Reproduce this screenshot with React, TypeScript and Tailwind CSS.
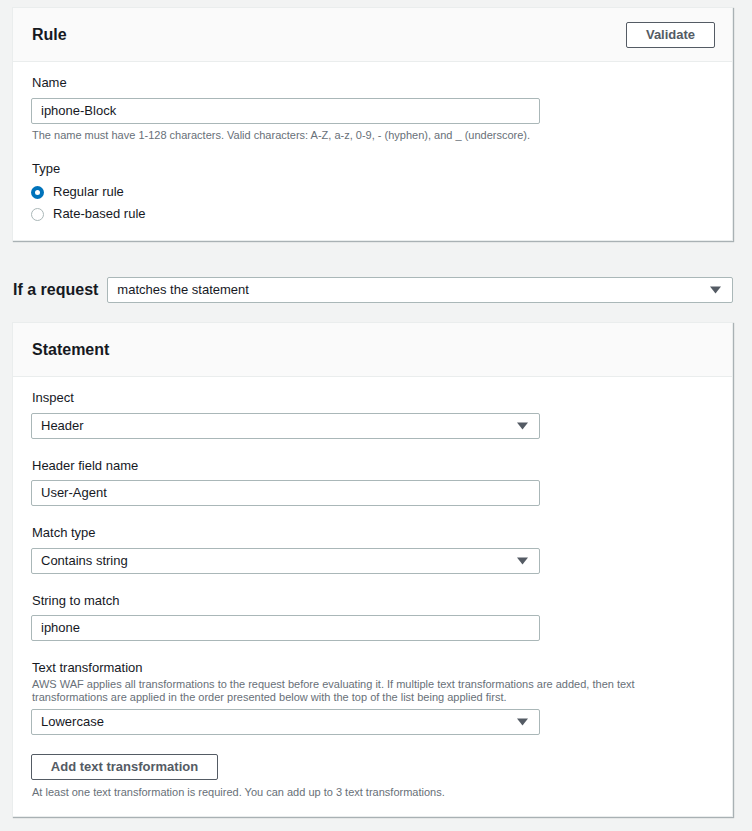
import React from "react";

const font = { fontFamily: '"Liberation Sans", Arial, sans-serif' };

function Caret() {
  return (
    <svg width="11" height="8" viewBox="0 0 11 8" className="shrink-0">
      <polygon points="0,0.5 11,0.5 5.5,7.5" fill="#545b64" />
    </svg>
  );
}

function Select({ value, className = "" }: { value: string; className?: string }) {
  return (
    <div
      className={`flex h-[26px] items-center justify-between rounded-[2px] border border-[#aab7b8] bg-white pl-[9px] pr-[11px] text-[13px] text-[#16191f] ${className}`}
    >
      <span>{value}</span>
      <Caret />
    </div>
  );
}

function Input({ value }: { value: string }) {
  return (
    <div className="flex h-[26px] w-[509px] items-center rounded-[2px] border border-[#aab7b8] bg-white pl-[9px] text-[13px] text-[#16191f]">
      {value}
    </div>
  );
}

function Label({ children }: { children: React.ReactNode }) {
  return <div className="ml-[1px] h-[20px] text-[13px] leading-[20px] text-[#16191f]">{children}</div>;
}

function Card({ title, right, children }: { title: string; right?: React.ReactNode; children: React.ReactNode }) {
  return (
    <div className="w-[721px] border border-[#eaeded] bg-white shadow-[1px_1px_1px_0_rgba(0,28,36,0.3)]">
      <div className="flex h-[54px] items-center justify-between border-b border-[#eaeded] bg-[#fafafa] pl-[19px] pr-[17px]">
        <h2 className="text-[16px] font-bold text-[#16191f]">{title}</h2>
        {right}
      </div>
      <div className="pl-[18px] pr-[19px]">{children}</div>
    </div>
  );
}

export default function App() {
  return (
    <div style={font} className="min-h-[831px] bg-[#f2f3f3] pl-[12px] pt-[7px]">
      <Card
        title="Rule"
        right={
          <button className="flex h-[26px] w-[89px] items-center justify-center rounded-[2px] border border-[#545b64] bg-white text-[13px] font-bold text-[#545b64]">
            Validate
          </button>
        }
      >
        <div className="pt-[11px]">
          <Label>Name</Label>
          <div className="mt-[5px]">
            <Input value="iphone-Block" />
          </div>
          <div className="ml-[1px] mt-[3px] text-[11px] leading-[16px] text-[#687078]">
            The name must have 1-128 characters. Valid characters: A-Z, a-z, 0-9, - (hyphen), and _ (underscore).
          </div>
          <div className="mt-[16px]">
            <Label>Type</Label>
          </div>
          <div className="mt-[2px] flex h-[22px] items-center gap-[9px] text-[13px] text-[#16191f]">
            <span className="flex h-[13px] w-[13px] items-center justify-center rounded-full bg-[#0073bb]">
              <span className="h-[5px] w-[5px] rounded-full bg-white" />
            </span>
            Regular rule
          </div>
          <div className="flex h-[22px] items-center gap-[9px] text-[13px] text-[#16191f]">
            <span className="h-[13px] w-[13px] rounded-full border border-[#aab7b8] bg-white" />
            Rate-based rule
          </div>
          <div className="h-[15px]" />
        </div>
      </Card>

      <div className="mt-[36px] flex w-[721px] items-center gap-[9px]">
        <span className="ml-[1px] text-[16px] font-bold text-[#16191f]">If a request</span>
        <Select value="matches the statement" className="flex-1" />
      </div>

      <div className="mt-[19px]">
        <Card title="Statement">
          <div className="pt-[11px]">
            <Label>Inspect</Label>
            <Select value="Header" className="mt-[5px] w-[509px]" />

            <div className="mt-[17px]">
              <Label>Header field name</Label>
            </div>
            <div className="mt-[4px]">
              <Input value="User-Agent" />
            </div>

            <div className="mt-[17px]">
              <Label>Match type</Label>
            </div>
            <Select value="Contains string" className="mt-[5px] w-[509px]" />

            <div className="mt-[17px]">
              <Label>String to match</Label>
            </div>
            <div className="mt-[4px]">
              <Input value="iphone" />
            </div>

            <div className="mt-[17px]">
              <Label>Text transformation</Label>
            </div>
            <div className="ml-[1px] w-[640px] text-[11px] leading-[13px] text-[#687078]">
              AWS WAF applies all transformations to the request before evaluating it. If multiple text transformations are added, then text transformations are applied in the order presented below with the top of the list being applied first.
            </div>
            <Select value="Lowercase" className="mt-[5px] w-[509px]" />

            <button className="mt-[19px] flex h-[26px] w-[187px] items-center justify-center rounded-[2px] border border-[#545b64] bg-white text-[13px] font-bold text-[#545b64]">
              Add text transformation
            </button>
            <div className="ml-[1px] mt-[4px] text-[11px] leading-[16px] text-[#687078]">
              At least one text transformation is required. You can add up to 3 text transformations.
            </div>
            <div className="h-[16px]" />
          </div>
        </Card>
      </div>
    </div>
  );
}
